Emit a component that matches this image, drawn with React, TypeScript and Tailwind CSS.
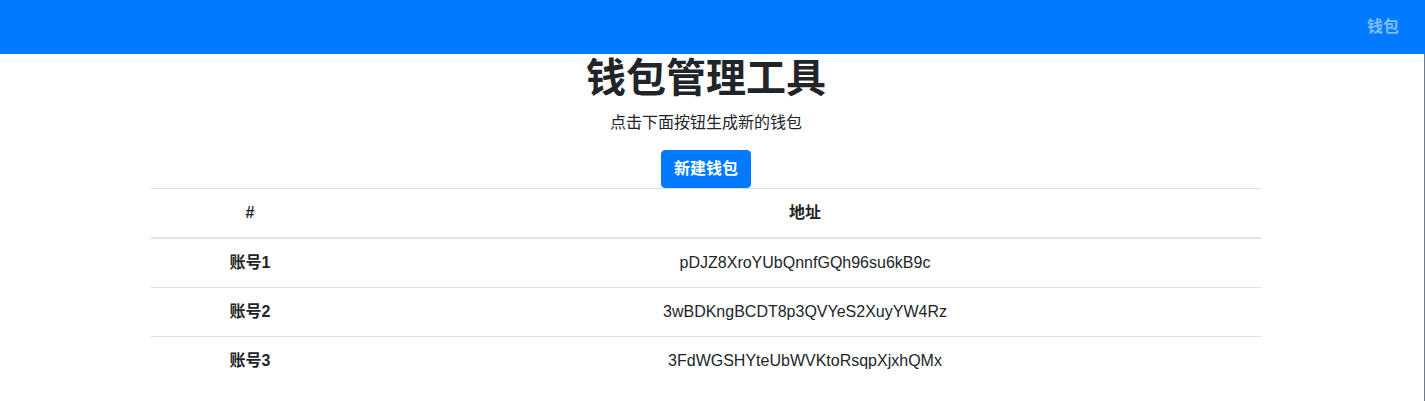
export default function App() {
  const rows = [
    ["账号1", "pDJZ8XroYUbQnnfGQh96su6kB9c"],
    ["账号2", "3wBDKngBCDT8p3QVYeS2XuyYW4Rz"],
    ["账号3", "3FdWGSHYteUbWVKtoRsqpXjxhQMx"],
  ];
  return (
    <div
      className="min-h-[401px] bg-white text-[#212529] text-[16px]"
      style={{ fontFamily: '"Liberation Sans", "Noto Sans CJK SC", sans-serif' }}
    >
      <nav className="h-[54px] bg-[#007bff] flex items-center justify-end pr-[26px]">
        <span className="text-[16px] font-bold text-white/50">钱包</span>
      </nav>
      <div className="flex">
        <div className="flex-1 flex flex-col items-center pr-[12px]">
          <h1 className="text-[40px] leading-[48px] font-bold m-0">钱包管理工具</h1>
          <p className="mt-[9px] leading-[24px]">点击下面按钮生成新的钱包</p>
          <button className="mt-[15px] h-[38px] px-[12px] rounded-[4px] bg-[#007bff] border border-[#007bff] text-white font-bold leading-[24px]">
            新建钱包
          </button>
          <table className="w-[1110px] border-collapse mt-0">
            <thead>
              <tr>
                <th className="w-[198px] border-t border-b-2 border-[#dee2e6] py-[12px] leading-[24px] font-bold">#</th>
                <th className="border-t border-b-2 border-[#dee2e6] py-[12px] leading-[24px] font-bold">地址</th>
              </tr>
            </thead>
            <tbody>
              {rows.map(([a, b], i) => (
                <tr key={a}>
                  <th className={`${i === 0 ? "" : "border-t"} border-[#dee2e6] py-[12px] leading-[24px] font-bold`}>{a}</th>
                  <td className={`${i === 0 ? "" : "border-t"} border-[#dee2e6] py-[12px] leading-[24px] text-center`}>{b}</td>
                </tr>
              ))}
            </tbody>
          </table>
        </div>
        <div className="w-[1px] bg-[#6c7a8a] self-stretch min-h-[347px]" />
      </div>
    </div>
  );
}
